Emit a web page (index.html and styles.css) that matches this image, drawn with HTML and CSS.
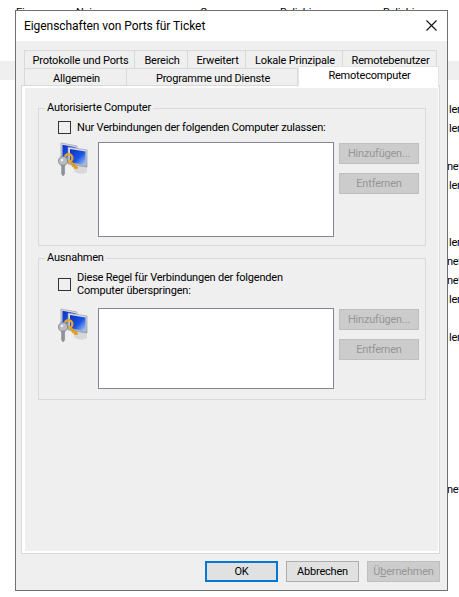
FILE: index.html
```html
<!DOCTYPE html>
<html lang="de">
<head>
  <meta charset="UTF-8" />
  <title>Eigenschaften von Ports für Ticket</title>
  <link rel="stylesheet" href="styles.css">
</head>
<body>
  <!-- the firewall rule list behind the dialog -->
  <div class="rules">
    <div class="rule top"><span class="c1"></span><span class="c2"></span><span class="c3">Zugang</span><span class="c4">Beliebig</span><span class="c5"></span></div>
    <div class="rule head"><span class="c1">Eigen</span><span class="c2">Nein</span><span class="c3">Gruppe</span><span class="c4">Beliebig</span><span class="c5">Beliebig</span></div>
    <div class="rule"></div>
    <div class="rule"></div>
    <div class="rule selected"></div>
    <div class="rule"></div>
    <div class="rule"><span class="c6">ler</span></div>
    <div class="rule"><span class="c6">ler</span></div>
    <div class="rule"></div>
    <div class="rule"><span class="c6 net">net</span></div>
    <div class="rule"><span class="c6">ler</span></div>
    <div class="rule"></div>
    <div class="rule"></div>
    <div class="rule"><span class="c6">ler</span></div>
    <div class="rule"><span class="c6 net">net</span></div>
    <div class="rule"><span class="c6 net">net</span></div>
    <div class="rule"><span class="c6">ler</span></div>
    <div class="rule"></div>
    <div class="rule"><span class="c6">ler</span></div>
    <div class="rule"></div>
    <div class="rule"></div>
    <div class="rule"></div>
    <div class="rule"></div>
    <div class="rule"></div>
    <div class="rule"></div>
    <div class="rule"></div>
    <div class="rule"><span class="c6 net">net</span></div>
    <div class="rule"></div>
    <div class="rule"></div>
    <div class="rule"></div>
    <div class="rule"></div>
    <div class="rule"><span class="c3">Zugang</span><span class="c4">Beliebig</span><span class="c5">Beliebig</span></div>
  </div>

  <div class="dialog">
    <div class="titlebar">
      <span class="title">Eigenschaften von Ports für Ticket</span>
      <svg class="close" width="11" height="11" viewBox="0 0 11 11"><path d="M0.5 0.5 L10.5 10.5 M10.5 0.5 L0.5 10.5" stroke="#111" stroke-width="1.1" fill="none"/></svg>
    </div>

    <div class="tabs">
      <div class="tab-row">
        <div class="tab t-proto">Protokolle und Ports</div>
        <div class="tab t-scope">Bereich</div>
        <div class="tab t-adv">Erweitert</div>
        <div class="tab t-local">Lokale Prinzipale</div>
        <div class="tab t-user">Remotebenutzer</div>
      </div>
      <div class="tab-row">
        <div class="tab t-general">Allgemein</div>
        <div class="tab t-apps">Programme und Dienste</div>
        <div class="tab t-remote active">Remotecomputer</div>
      </div>
    </div>

    <div class="panel">
      <fieldset class="group group-auth">
        <legend>Autorisierte Computer</legend>
        <label class="check">
          <span class="box"></span>
          <span>Nur Verbindungen der folgenden Computer zulassen:</span>
        </label>
        <div class="picker">
          <svg class="icon" width="32" height="36" viewBox="0 0 32 36"><use href="#pc-key"/></svg>
          <div class="list"></div>
          <div class="side-btns">
            <button class="btn off">Hinzufügen...</button>
            <button class="btn off">Entfernen</button>
          </div>
        </div>
      </fieldset>

      <fieldset class="group group-except">
        <legend>Ausnahmen</legend>
        <label class="check">
          <span class="box"></span>
          <span>Diese Regel für Verbindungen der folgenden<br>Computer überspringen:</span>
        </label>
        <div class="picker">
          <svg class="icon" width="32" height="36" viewBox="0 0 32 36"><use href="#pc-key"/></svg>
          <div class="list"></div>
          <div class="side-btns">
            <button class="btn off">Hinzufügen...</button>
            <button class="btn off">Entfernen</button>
          </div>
        </div>
      </fieldset>
    </div>

    <div class="footer">
      <button class="btn wide default">OK</button>
      <button class="btn wide">Abbrechen</button>
      <button class="btn wide off">Ü<span class="access">b</span>ernehmen</button>
    </div>
  </div>

  <svg class="defs" width="0" height="0">
    <defs>
      <linearGradient id="scr" x1="0" y1="0" x2="1" y2="1">
        <stop offset="0" stop-color="#0a2fc4"/>
        <stop offset="0.55" stop-color="#1a55e2"/>
        <stop offset="1" stop-color="#b4d0f8"/>
      </linearGradient>
      <linearGradient id="case" x1="0" y1="0" x2="0" y2="1">
        <stop offset="0" stop-color="#e4e6ec"/>
        <stop offset="1" stop-color="#a9adb6"/>
      </linearGradient>
      <g id="pc-key">
        <path d="M4 2 L20 5 L20 21 L4 18 Z" fill="url(#case)" stroke="#8a8f9a" stroke-width="0.6"/>
        <path d="M5.5 3.8 L18.5 6.2 L18.5 18 L5.5 15.8 Z" fill="url(#scr)"/>
        <path d="M18 24 L30 26 L30 31 C26 34 20 33 17 30 Z" fill="#cfd2d6" opacity="0.8"/>
        <path d="M11 6 L30 9 L30 26 L11 23 Z" fill="url(#case)" stroke="#8a8f9a" stroke-width="0.6"/>
        <path d="M13 8 L28.5 10.5 L28.5 24 L13 21.5 Z" fill="url(#scr)"/>
        <path d="M13 20 L20.5 27.5 M16.5 24 L15 25.5 M18.5 26 L17 27.5" stroke="#e39a1c" stroke-width="2.4" fill="none"/>
        <circle cx="11.5" cy="17" r="3.8" fill="none" stroke="#e8a428" stroke-width="2.4"/>
        <circle cx="6" cy="20" r="4.6" fill="#b8bcc4" stroke="#70747c" stroke-width="0.7"/>
        <circle cx="5" cy="19" r="1.3" fill="#eee"/>
        <path d="M4.6 24 L7.6 24 L7.6 33 L6 35 L4.6 33 Z" fill="#8e929a" stroke="#70747c" stroke-width="0.4"/>
      </g>
    </defs>
  </svg>
</body>
</html>
```

FILE: styles.css
```css
* {
  box-sizing: border-box;
}

html, body {
  height: 100%;
}

body {
  margin: 0;
  overflow: hidden;
  background: white;
  color: #000;
  font-family: Roboto, 'Liberation Sans', sans-serif;
  font-size: 11px;
  letter-spacing: -0.2px;
}

.rules {
  margin-top: -15px;
}

.rule {
  display: flex;
  height: 19px;
  line-height: 21px;
  white-space: nowrap;
}

.rule.top {
  line-height: 19px;
}

.rule.head {
  line-height: 17px;
}

.rule.selected {
  background: #efefef;
}

.c1 { width: 76px; padding-left: 16px; }
.c2 { width: 124px; }
.c3 { width: 80px; }
.c4 { width: 103px; }
.c5 { width: 66px; }
.c6 { margin-left: 449px; }
.c6.net { margin-left: 447px; }
.c3:first-child { margin-left: 200px; }

.dialog {
  position: absolute;
  left: 15px;
  top: 10px;
  width: 433px;
  height: 581px;
  display: flex;
  flex-direction: column;
  background: #efefef;
  border: 1px solid #707070;
}

.titlebar {
  display: flex;
  align-items: center;
  justify-content: space-between;
  height: 30px;
  padding: 0 10px 0 8px;
  background: white;
}

.title {
  font-size: 12px;
  letter-spacing: -0.06px;
}

.close {
  margin-bottom: 2px;
}

.tabs {
  margin: 9px 0 0 8px;
}

.tab-row {
  display: flex;
  height: 18px;
}

.tab {
  height: 18px;
  padding-left: 2px;
  line-height: 19px;
  text-align: center;
  background: #efefef;
  border: 1px solid #d9d9d9;
  border-bottom: none;
  border-left: none;
}

.tab:first-child {
  border-left: 1px solid #d9d9d9;
}

.t-proto { width: 111px; }
.t-scope { width: 53px; }
.t-adv { width: 58px; }
.t-local { width: 97px; }
.t-user { width: 94px; }
.t-general { width: 103px; }
.t-apps { width: 171px; }

.tab.active {
  position: relative;
  z-index: 1;
  width: 141px;
  height: 21px;
  margin-top: -2px;
  line-height: 18px;
  background: white;
  border-color: #e4e4e4;
  border-left: 1px solid #e4e4e4;
}

.panel {
  width: 417px;
  height: 467px;
  margin-left: 6px;
  padding: 12px 12px 0 13px;
  border: solid white;
  border-width: 2px 1px 2px 3px;
  outline: 1px solid #d9d9d9;
}

.group {
  margin: 0;
  min-width: 0;
  padding: 5px 6px 8px 19px;
  border: 1px solid #d9d9d9;
}

.group legend {
  margin-left: -13px;
  padding: 0 2px;
  line-height: 16px;
}

.group-except {
  margin-top: 4px;
  padding-bottom: 10px;
}

.check {
  display: flex;
  align-items: center;
  gap: 6px;
  line-height: 13px;
}

.box {
  flex: none;
  width: 13px;
  height: 13px;
  background: #efefef;
  border: 1px solid #333;
}

.picker {
  display: flex;
  margin-top: 8px;
}

.group-except .picker {
  margin-top: 11px;
}

.icon {
  flex: none;
  width: 32px;
  margin: -1px 9px 0 -1px;
}

.list {
  flex: none;
  width: 236px;
  height: 95px;
  background: white;
  border: 1px solid #82878f;
}

.group-except .list {
  height: 81px;
}

.side-btns {
  display: flex;
  flex-direction: column;
  gap: 9px;
  margin: 1px 0 0 5px;
}

.btn {
  width: 80px;
  height: 21px;
  padding: 0;
  font: inherit;
  letter-spacing: inherit;
  color: #000;
  background: #e1e1e1;
  border: 1px solid #adadad;
}

.btn.off {
  color: #969696;
  background: #ccc;
  border-color: #bfbfbf;
}

.footer {
  display: flex;
  justify-content: flex-end;
  gap: 8px;
  margin-top: 8px;
  padding-right: 7px;
}

.btn.wide {
  width: 73px;
}

.btn.default {
  border: 2px solid #0078d7;
}

.access {
  text-decoration: underline;
}

.defs {
  position: absolute;
}
```
